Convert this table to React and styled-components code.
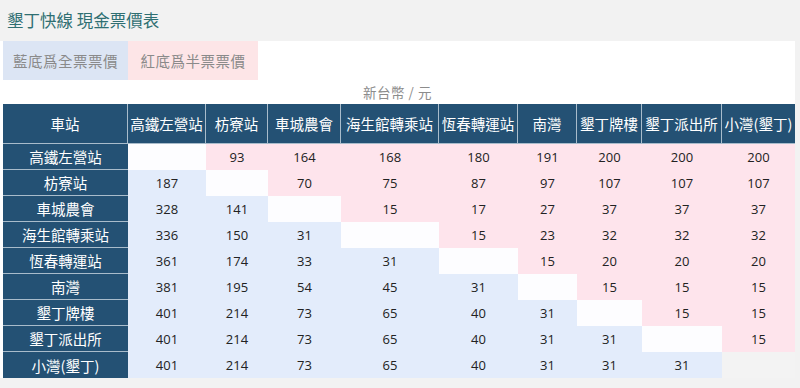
import styled, { createGlobalStyle } from 'styled-components';

const GlobalStyle = createGlobalStyle`
  html, body {
    margin: 0;
    padding: 0;
    background: #f2f2f2;
  }
  body {
    width: 800px;
    height: 388px;
    overflow: hidden;
    font-family: "Noto Sans CJK TC", "Noto Sans", sans-serif;
  }
`;

const headers = ['車站', '高鐵左營站', '枋寮站', '車城農會', '海生館轉乘站', '恆春轉運站', '南灣', '墾丁牌樓', '墾丁派出所', '小灣(墾丁)'];
const widths = [125, 78, 62, 73, 98, 79, 59, 65, 80, 73];

const rows = [
  ['高鐵左營站', '', 93, 164, 168, 180, 191, 200, 200, 200],
  ['枋寮站', 187, '', 70, 75, 87, 97, 107, 107, 107],
  ['車城農會', 328, 141, '', 15, 17, 27, 37, 37, 37],
  ['海生館轉乘站', 336, 150, 31, '', 15, 23, 32, 32, 32],
  ['恆春轉運站', 361, 174, 33, 31, '', 15, 20, 20, 20],
  ['南灣', 381, 195, 54, 45, 31, '', 15, 15, 15],
  ['墾丁牌樓', 401, 214, 73, 65, 40, 31, '', 15, 15],
  ['墾丁派出所', 401, 214, 73, 65, 40, 31, 31, '', 15],
  ['小灣(墾丁)', 401, 214, 73, 65, 40, 31, 31, 31, ''],
];

export default function App() {
  return (
    <Page>
      <GlobalStyle />
      <TitleBar>墾丁快線 現金票價表</TitleBar>
      <Content>
        <Legend>
          <LegendItem $tone='blue'>藍底爲全票票價</LegendItem>
          <LegendItem $tone='pink'>紅底爲半票票價</LegendItem>
        </Legend>
        <Caption>新台幣 / 元</Caption>
        <FareTable>
          <colgroup>
            {widths.map((w, i) => <col key={i} style={{ width: w }} />)}
          </colgroup>
          <thead>
            <tr>
              {headers.map((h, i) => <HeadCell key={i} $last={i === headers.length - 1}>{h}</HeadCell>)}
            </tr>
          </thead>
          <tbody>
            {rows.map((row, r) => (
              <tr key={r}>
                <StationCell>{row[0]}</StationCell>
                {row.slice(1).map((v, c) => {
                  let tone = 'white';
                  if (c > r) tone = 'pink';
                  if (c < r) tone = 'blue';
                  if (c === r && r === rows.length - 1) tone = 'gray';
                  return <PriceCell key={c} $tone={tone}>{v}</PriceCell>;
                })}
              </tr>
            ))}
          </tbody>
        </FareTable>
      </Content>
    </Page>
  );
}

const tones = {
  blue: '#e3ecfb',
  pink: '#fee4ec',
  white: '#fdfdff',
  gray: '#f3f3f3',
};

const Page = styled.div`
  width: 800px;
  height: 388px;
  background: #f2f2f2;
`;

const TitleBar = styled.div`
  height: 41px;
  box-sizing: border-box;
  padding: 8px 0 0 7px;
  font-size: 16.5px;
  line-height: 24px;
  color: #2f6f72;
`;

const Content = styled.div`
  width: 795px;
  background: #ffffff;
  display: flex;
  flex-direction: column;
`;

const Legend = styled.div`
  display: flex;
  height: 39px;
  padding-left: 3px;
`;

const LegendItem = styled.div`
  display: flex;
  align-items: center;
  justify-content: center;
  width: ${p => (p.$tone === 'blue' ? '125px' : '130px')};
  background: ${p => (p.$tone === 'blue' ? '#dce5f4' : '#fde5e7')};
  color: #8a8a8a;
  font-size: 14.5px;
  letter-spacing: 0.5px;
`;

const Caption = styled.div`
  height: 24px;
  line-height: 24px;
  text-align: center;
  font-size: 13.5px;
  color: #8c8c8c;
  letter-spacing: 0.5px;
`;

const FareTable = styled.table`
  margin-left: 3px;
  width: 792px;
  table-layout: fixed;
  border-collapse: separate;
  border-spacing: 0;
  background: #f3f3f3;
`;

const HeadCell = styled.th`
  height: 39px;
  padding: 0;
  background: #245174;
  color: #ffffff;
  font-weight: 400;
  font-size: 14.5px;
  white-space: nowrap;
  text-align: center;
  border-right: ${p => (p.$last ? 'none' : '1px solid #a9bccb')};
  border-bottom: 1px solid #a9bccb;
`;

const StationCell = styled.td`
  height: 25px;
  padding: 0;
  background: #245174;
  color: #ffffff;
  font-size: 14.5px;
  text-align: center;
  white-space: nowrap;
  border-bottom: 1px solid #a9bccb;
  tr:last-child & {
    border-bottom: none;
    height: 26px;
  }
`;

const PriceCell = styled.td`
  padding: 0;
  background: ${p => tones[p.$tone]};
  color: #222222;
  font-family: "Open Sans", "Liberation Sans", sans-serif;
  font-size: 13px;
  text-align: center;
`;
